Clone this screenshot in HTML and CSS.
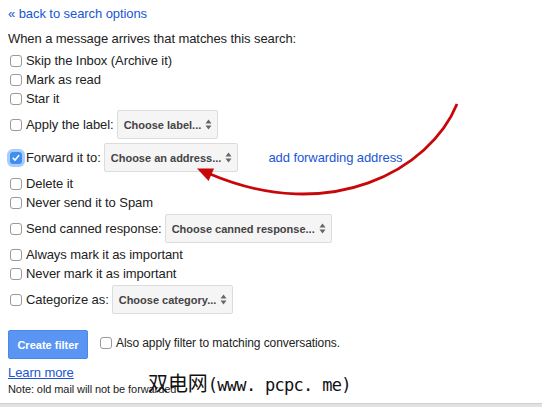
FILE: index.html
```html
<!DOCTYPE html>
<html>
<head>
<meta charset="utf-8">
<link rel="stylesheet" href="styles.css">
</head>
<body>
<div class="page">
  <a class="back link" href="#">« back to search options</a>
  <div class="intro">When a message arrives that matches this search:</div>
  <div class="actions">
    <label class="row"><span class="cb"></span>Skip the Inbox (Archive it)</label>
    <label class="row"><span class="cb"></span>Mark as read</label>
    <label class="row"><span class="cb"></span>Star it</label>
    <label class="row tall"><span class="cb"></span>Apply the label:<span class="select">Choose label...<svg class="arr" width="7" height="11" viewBox="0 0 7 11"><path d="M3.5 0.5L6.5 4.5H0.5Z M3.5 10.5L6.5 6.5H0.5Z"/></svg></span></label>
    <label class="row tall"><span class="cb checked"><svg width="12" height="12" viewBox="0 0 12 12"><path d="M3.2 6.2L5.1 8.1L8.8 3.6" fill="none" stroke="#fff" stroke-width="1.6" stroke-linecap="round" stroke-linejoin="round"/></svg></span>Forward it to:<span class="select">Choose an address...<svg class="arr" width="7" height="11" viewBox="0 0 7 11"><path d="M3.5 0.5L6.5 4.5H0.5Z M3.5 10.5L6.5 6.5H0.5Z"/></svg></span><a class="link addfwd" href="#">add forwarding address</a></label>
    <label class="row"><span class="cb"></span>Delete it</label>
    <label class="row"><span class="cb"></span>Never send it to Spam</label>
    <label class="row tall"><span class="cb"></span>Send canned response:<span class="select">Choose canned response...<svg class="arr" width="7" height="11" viewBox="0 0 7 11"><path d="M3.5 0.5L6.5 4.5H0.5Z M3.5 10.5L6.5 6.5H0.5Z"/></svg></span></label>
    <label class="row"><span class="cb"></span>Always mark it as important</label>
    <label class="row"><span class="cb"></span>Never mark it as important</label>
    <label class="row tall"><span class="cb"></span>Categorize as:<span class="select">Choose category...<svg class="arr" width="7" height="11" viewBox="0 0 7 11"><path d="M3.5 0.5L6.5 4.5H0.5Z M3.5 10.5L6.5 6.5H0.5Z"/></svg></span></label>
  </div>
  <div class="submit">
    <button class="btn">Create filter</button>
    <label class="row also"><span class="cb"></span>Also apply filter to matching conversations.</label>
  </div>
  <a class="learn link" href="#">Learn more</a>
  <div class="note">Note: old mail will not be forwarded</div>
</div>
<div class="strip"></div>
<svg class="arrow" width="542" height="407" viewBox="0 0 542 407">
  <path d="M457 104 C430 170 330 225 210 174" fill="none" stroke="#c8070b" stroke-width="2.8"/>
  <path d="M197 168.5 L214 168.5 L208.6 181 Z" fill="#c8070b"/>
</svg>
<div class="watermark"><span class="wm-cjk">双电网</span><span class="wm-lat">(www. pcpc. me)</span></div>
</body>
</html>
```
FILE: styles.css
```css
html, body {
  margin: 0;
  padding: 0;
  background: #fff;
  overflow: hidden;
}
body {
  width: 542px;
  height: 407px;
  position: relative;
  font-family: "Liberation Sans", Arial, sans-serif;
  font-size: 13px;
  letter-spacing: -0.08px;
  color: #222;
}
.page {
  padding-left: 8px;
  padding-top: 4px;
}
.link {
  color: #1a56d6;
  text-decoration: none;
}
.back {
  display: block;
  line-height: 19px;
}
.intro {
  margin-top: 6px;
  line-height: 19px;
}
.actions {
  margin-top: 3px;
}
.row {
  display: flex;
  align-items: center;
  height: 19px;
  white-space: nowrap;
}
.row.tall {
  height: 33px;
}
.cb {
  box-sizing: border-box;
  width: 12px;
  height: 12px;
  margin-left: 2px;
  margin-right: 4px;
  border: 1px solid #9a9a9a;
  border-radius: 3px;
  background: #fff;
  flex: none;
  display: flex;
  align-items: center;
  justify-content: center;
}
.cb.checked {
  border: none;
  background: #3f8ef0;
  box-shadow: 0 0 0 3px #a8cdfa;
}
.cb.checked svg {
  display: block;
}
.select {
  box-sizing: border-box;
  height: 29px;
  margin-left: 3px;
  padding: 0 5px 0 6px;
  display: flex;
  align-items: center;
  gap: 4px;
  background: #f5f5f5;
  border: 1px solid #dcdcdc;
  border-radius: 2px;
  font-size: 11px;
  font-weight: bold;
  letter-spacing: 0;
  color: #444;
}
.arr {
  fill: #666;
  display: block;
}
.addfwd {
  margin-left: 30px;
}
.submit {
  margin-top: 14px;
  display: flex;
  align-items: center;
}
.btn {
  box-sizing: border-box;
  width: 80px;
  height: 29px;
  margin: 0;
  padding: 0;
  border: 1px solid #4a87ee;
  border-radius: 2px;
  background: #5b95f3;
  color: #fff;
  font-family: "Liberation Sans", Arial, sans-serif;
  font-size: 11px;
  font-weight: bold;
}
.also {
  margin-left: 10px;
  margin-top: -4px;
  font-size: 12px;
}
.also .cb {
  margin-left: 2px;
  margin-right: 4px;
}
.learn {
  display: block;
  width: max-content;
  margin-top: 4px;
  line-height: 19px;
  text-decoration: underline;
}
.note {
  font-size: 11px;
  line-height: 14px;
  color: #222;
}
.strip {
  margin-top: 7px;
  height: 5px;
  background: #e2e2e2;
  border-top: 1px solid #cfcfcf;
}
.arrow {
  position: absolute;
  left: 0;
  top: 0;
  pointer-events: none;
}
.watermark {
  position: absolute;
  left: 148px;
  top: 368px;
  display: flex;
  align-items: baseline;
  color: #111;
  white-space: nowrap;
}
.wm-cjk {
  font-family: "Noto Sans CJK SC", sans-serif;
  font-size: 20px;
}
.wm-lat {
  font-family: "DejaVu Sans Mono", monospace;
  font-size: 17px;
  letter-spacing: -0.7px;
}
```
